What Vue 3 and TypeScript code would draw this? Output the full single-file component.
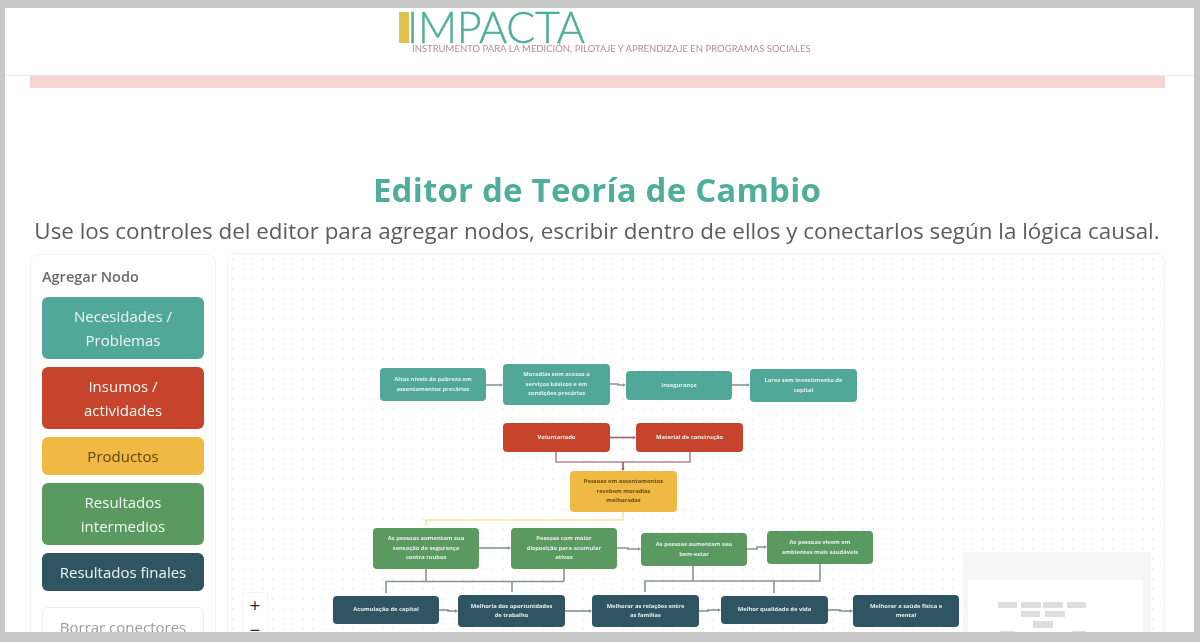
<script setup lang="ts">
type Kind = 'need' | 'input' | 'product' | 'mid' | 'final'
interface DiagramNode { text: string; kind: Kind; x: number; y: number; w: number; h: number }

const ox = 228
const oy = 254

const palette: { label: string; kind: Kind }[] = [
  { label: 'Necesidades / Problemas', kind: 'need' },
  { label: 'Insumos / actividades', kind: 'input' },
  { label: 'Productos', kind: 'product' },
  { label: 'Resultados intermedios', kind: 'mid' },
  { label: 'Resultados finales', kind: 'final' }
]

const nodes: DiagramNode[] = [
  { text: 'Altos níveis de pobreza em assentamentos precários', kind: 'need', x: 380, y: 368, w: 106, h: 33 },
  { text: 'Moradias sem acesso a serviços básicos e em condições precárias', kind: 'need', x: 503, y: 364, w: 107, h: 41 },
  { text: 'Insegurança', kind: 'need', x: 626, y: 371, w: 106, h: 29 },
  { text: 'Lares sem investimento de capital', kind: 'need', x: 750, y: 369, w: 107, h: 33 },
  { text: 'Voluntariado', kind: 'input', x: 503, y: 423, w: 107, h: 29 },
  { text: 'Material de construção', kind: 'input', x: 636, y: 423, w: 107, h: 29 },
  { text: 'Pessoas em assentamentos recebem moradias melhoradas', kind: 'product', x: 570, y: 471, w: 107, h: 41 },
  { text: 'As pessoas aumentam sua sensação de segurança contra roubos', kind: 'mid', x: 373, y: 528, w: 106, h: 41 },
  { text: 'Pessoas com maior disposição para acumular ativos', kind: 'mid', x: 511, y: 528, w: 106, h: 41 },
  { text: 'As pessoas aumentam seu bem-estar', kind: 'mid', x: 641, y: 533, w: 106, h: 33 },
  { text: 'As pessoas vivem em ambientes mais saudáveis', kind: 'mid', x: 767, y: 531, w: 106, h: 33 },
  { text: 'Acumulação de capital', kind: 'final', x: 333, y: 596, w: 106, h: 28 },
  { text: 'Melhoria das oportunidades de trabalho', kind: 'final', x: 458, y: 595, w: 107, h: 32 },
  { text: 'Melhorar as relações entre as famílias', kind: 'final', x: 592, y: 595, w: 107, h: 32 },
  { text: 'Melhor qualidade de vida', kind: 'final', x: 721, y: 596, w: 107, h: 28 },
  { text: 'Melhorar a saúde física e mental', kind: 'final', x: 853, y: 595, w: 106, h: 32 }
]

const edges: { d: string; color: string; arrow?: boolean }[] = [
  { d: 'M486 385H500', color: '#7f9c96', arrow: true },
  { d: 'M610 384H618V385H623', color: '#7f9c96', arrow: true },
  { d: 'M732 385H747', color: '#7f9c96', arrow: true },
  { d: 'M610 437.5H633', color: '#a8606a', arrow: true },
  { d: 'M556 452V462H690V452', color: '#a98a94' },
  { d: 'M623 462V468', color: '#a5544a', arrow: true },
  { d: 'M623 512V520H426V526', color: '#efe6a6' },
  { d: 'M479 548H508', color: '#87968a', arrow: true },
  { d: 'M617 548H628V549H638', color: '#87968a', arrow: true },
  { d: 'M747 549H757V547H764', color: '#87968a', arrow: true },
  { d: 'M426 569V581.5', color: '#8a9490' },
  { d: 'M564 569V581.5', color: '#8a9490' },
  { d: 'M386 593V581.5H564', color: '#8a9490' },
  { d: 'M512 581.5V592', color: '#8a9490' },
  { d: 'M645 592V581H820V564', color: '#8a9490' },
  { d: 'M693 566V581', color: '#8a9490' },
  { d: 'M774 581V593', color: '#8a9490' },
  { d: 'M439 610H448V611H455', color: '#7d8d8f', arrow: true },
  { d: 'M565 611H589', color: '#7d8d8f', arrow: true },
  { d: 'M699 611H708V610H718', color: '#7d8d8f', arrow: true },
  { d: 'M828 610H840V611H850', color: '#7d8d8f', arrow: true }
]

const minimap = [
  { x: 30, y: 22, w: 19, h: 6 }, { x: 53, y: 22, w: 20, h: 6 }, { x: 75, y: 22, w: 20, h: 6 }, { x: 99, y: 22, w: 19, h: 6 },
  { x: 53, y: 31, w: 19, h: 6 }, { x: 77, y: 31, w: 20, h: 6 },
  { x: 65, y: 41, w: 20, h: 7 },
  { x: 32, y: 51, w: 15, h: 4 }, { x: 104, y: 51, w: 14, h: 4 }
]

function nodeStyle(n: DiagramNode) {
  return { left: `${n.x - ox}px`, top: `${n.y - oy}px`, width: `${n.w}px`, height: `${n.h}px` }
}
function miniStyle(r: { x: number; y: number; w: number; h: number }) {
  return { left: `${r.x}px`, top: `${r.y}px`, width: `${r.w}px`, height: `${r.h}px` }
}
</script>

<template>
  <div class="frame">
    <header class="top">
      <div class="brand">
        <div class="brand-main">
          <span class="brand-bar"></span>
          <span class="brand-name">IMPACTA</span>
        </div>
        <div class="brand-tag">INSTRUMENTO PARA LA MEDICIÓN, PILOTAJE Y APRENDIZAJE EN PROGRAMAS SOCIALES</div>
      </div>
    </header>
    <div class="banner"></div>

    <main class="page">
      <h1 class="title">Editor de Teoría de Cambio</h1>
      <p class="lead">Use los controles del editor para agregar nodos, escribir dentro de ellos y conectarlos según la lógica causal.</p>

      <div class="workspace">
        <aside class="side">
          <h2 class="side-title">Agregar Nodo</h2>
          <button v-for="p in palette" :key="p.kind" class="add" :class="p.kind" type="button">{{ p.label }}</button>
          <button class="clear" type="button">Borrar conectores</button>
        </aside>

        <section class="canvas">
          <svg class="edges" :viewBox="`${ox} ${oy} 936 400`" width="936" height="400" fill="none">
            <defs>
              <marker id="tip" markerWidth="4" markerHeight="4" refX="0.5" refY="2" orient="auto" markerUnits="userSpaceOnUse">
                <path d="M0 0L3.5 2L0 4Z" fill="context-stroke" />
              </marker>
            </defs>
            <path v-for="(e, i) in edges" :key="i" :d="e.d" :stroke="e.color" stroke-width="1.6" :marker-end="e.arrow ? 'url(#tip)' : undefined" />
          </svg>
          <div v-for="n in nodes" :key="n.text" class="node" :class="n.kind" :style="nodeStyle(n)">{{ n.text }}</div>

          <div class="zoom">
            <span>+</span>
            <span>−</span>
          </div>
          <div class="mini">
            <div class="mini-view">
              <i v-for="(r, i) in minimap" :key="i" :style="miniStyle(r)"></i>
            </div>
          </div>
        </section>
      </div>
    </main>
  </div>
</template>

<style>
html, body { margin: 0; height: 100%; background: #c8c8c8; overflow: hidden; }
</style>

<style scoped>
.frame {
  margin: 8px 6px 0 5px;
  height: 624px;
  background: #fff;
  overflow: hidden;
  font-family: "Open Sans", "Noto Sans", sans-serif;
}
.top {
  height: 68px;
  box-sizing: border-box;
  padding: 3px 0 0 394px;
  border-bottom: 1px solid #e8e8e8;
}
.brand { filter: blur(0.4px); }
.brand-main { display: flex; align-items: center; height: 32px; }
.brand-bar { width: 10px; height: 31px; background: #e2c24f; }
.brand-name {
  margin-left: -2px;
  font-family: Lato, sans-serif;
  font-weight: 300;
  font-size: 43px;
  line-height: 32px;
  letter-spacing: -0.3px;
  color: #4fae9b;
  -webkit-text-stroke: 0.4px #4fae9b;
}
.brand-tag {
  margin: 1px 0 0 13px;
  font-family: Lato, sans-serif;
  font-size: 9.5px;
  line-height: 10px;
  color: #bc8c8c;
  white-space: nowrap;
}
.banner { height: 12px; margin: 0 29px 0 25px; background: #f4d5d1; filter: blur(0.4px); }
.page { padding: 0 30px 0 25px; }
.title {
  margin: 80px 0 0;
  text-align: center;
  font-size: 33px;
  line-height: 44px;
  font-weight: 700;
  letter-spacing: 0.2px;
  color: #4fae9b;
  filter: blur(0.3px);
}
.lead {
  margin: 2px -10px 0;
  text-align: center;
  font-size: 22.4px;
  line-height: 34px;
  color: #5c5c5c;
  white-space: nowrap;
  filter: blur(0.3px);
}
.workspace {
  display: grid;
  grid-template-columns: 186px 936px;
  gap: 12px;
  margin-top: 6px;
}
.side {
  height: 400px;
  box-sizing: border-box;
  padding: 11px 11px 0 11px;
  border: 1px solid #f3f3f3;
  border-radius: 8px;
  display: flex;
  flex-direction: column;
  gap: 8px;
}
.side-title {
  margin: 0 0 1px;
  font-size: 14.5px;
  line-height: 22px;
  font-weight: 600;
  color: #6a6a6a;
  filter: blur(0.3px);
}
.add, .clear {
  font-family: inherit;
  font-size: 15px;
  line-height: 24px;
  padding: 7px 16px;
  border: 0;
  border-radius: 6px;
  text-align: center;
  filter: blur(0.3px);
}
.add { color: #eef8f5; }
.clear {
  margin-top: 8px;
  background: #fff;
  border: 1px solid #eeeeee;
  color: #9b9b9b;
  white-space: nowrap;
  padding: 7px 4px;
}
.need { background: #52a898; }
.input { background: #c5442b; }
.product { background: #efb944; color: #5d4510; }
.mid { background: #5a9a60; }
.final { background: #2f5563; }
.add.product { color: #5d4510; }
.canvas {
  position: relative;
  height: 400px;
  border: 1px solid #f3f3f3;
  border-radius: 8px;
  margin: -1px;
  background-image: radial-gradient(circle, #f3f3f3 0.7px, transparent 0.9px);
  background-size: 10px 10px;
  overflow: hidden;
}
.edges { position: absolute; left: 0; top: 0; filter: blur(0.3px); }
.node {
  position: absolute;
  box-sizing: border-box;
  display: flex;
  align-items: center;
  justify-content: center;
  padding: 0 12px;
  border-radius: 4px;
  text-align: center;
  font-size: 5.8px;
  line-height: 9.4px;
  font-weight: 700;
  color: #e6f2ef;
  filter: blur(0.45px);
}
.node.product { color: #6b4a12; }
.zoom {
  position: absolute;
  left: 14px;
  top: 338px;
  width: 24px;
  display: flex;
  flex-direction: column;
  border: 1px solid #f6f6f6;
  background: #fff;
  font-size: 19px;
  line-height: 25px;
  text-align: center;
  color: #2b2b2b;
}
.mini {
  position: absolute;
  left: 735px;
  top: 298px;
  width: 187px;
  height: 100px;
  background: #f6f6f6;
  padding: 28px 7px 0 5px;
  box-sizing: border-box;
}
.mini-view { position: relative; height: 72px; background: #fff; }
.mini-view i { position: absolute; background: #dedede; filter: blur(0.4px); }
</style>
